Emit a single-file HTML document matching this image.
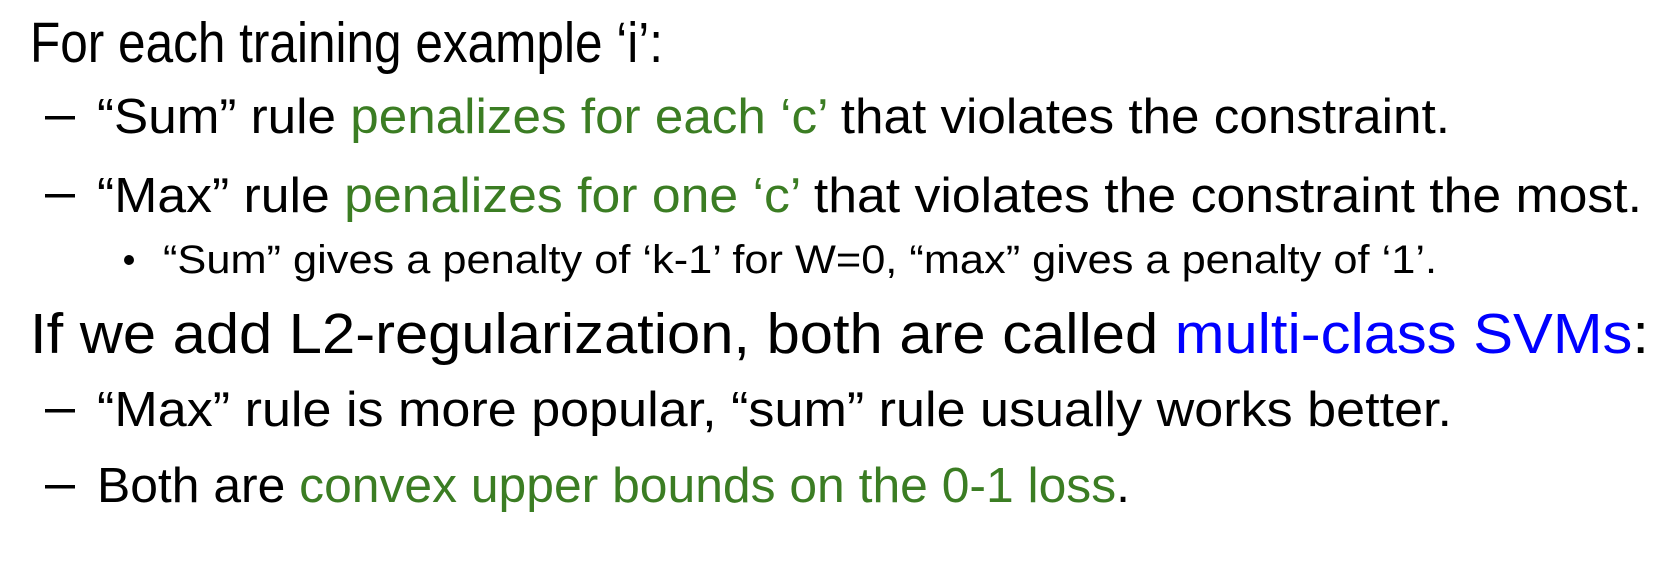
<!DOCTYPE html>
<html><head><meta charset="utf-8"><style>
html,body{margin:0;padding:0;background:#fff;width:1674px;height:562px;overflow:hidden}
svg{display:block}
text{font-family:"Liberation Sans",sans-serif}
.g{fill:#3b7d23}.b{fill:#0000ff}
</style></head><body>
<svg width="1674" height="562" viewBox="0 0 1674 562" xmlns="http://www.w3.org/2000/svg">
<text x="30" y="62" font-size="57" textLength="633" lengthAdjust="spacingAndGlyphs">For each training example ‘i’:</text>

<rect x="45" y="116" width="30" height="3.5" fill="#000"/>
<text x="97" y="133" font-size="49" textLength="1353" lengthAdjust="spacingAndGlyphs">“Sum” rule <tspan class="g">penalizes for each ‘c’</tspan> that violates the constraint.</text>

<rect x="45" y="194" width="30" height="3.5" fill="#000"/>
<text x="97" y="212" font-size="49" textLength="1545" lengthAdjust="spacingAndGlyphs">“Max” rule <tspan class="g">penalizes for one ‘c’</tspan> that violates the constraint the most.</text>

<circle cx="129" cy="260" r="5" fill="#000"/>
<text x="163" y="273" font-size="40" textLength="1274" lengthAdjust="spacingAndGlyphs">“Sum” gives a penalty of ‘k-1’ for W=0, “max” gives a penalty of ‘1’.</text>

<text x="30" y="353" font-size="57" textLength="1619" lengthAdjust="spacingAndGlyphs">If we add L2-regularization, both are called <tspan class="b">multi-class SVMs</tspan>:</text>

<rect x="45" y="409" width="30" height="3.5" fill="#000"/>
<text x="97" y="426" font-size="49" textLength="1355" lengthAdjust="spacingAndGlyphs">“Max” rule is more popular, “sum” rule usually works better.</text>

<rect x="45" y="485" width="30" height="3.5" fill="#000"/>
<text x="97" y="502" font-size="49" textLength="1033" lengthAdjust="spacingAndGlyphs">Both are <tspan class="g">convex upper bounds on the 0-1 loss</tspan>.</text>
</svg>
</body></html>
